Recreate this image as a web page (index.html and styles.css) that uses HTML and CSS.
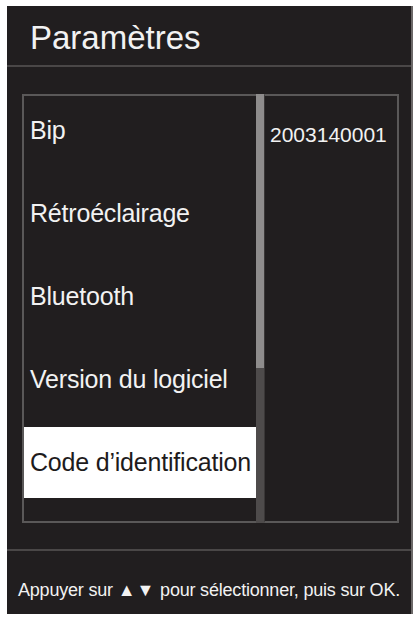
FILE: index.html
```html
<!DOCTYPE html>
<html lang="fr">
  <head>
    <meta charset="UTF-8" />
    <meta name="viewport" content="width=device-width, initial-scale=1.0" />
    <title>Paramètres</title>
    <link rel="stylesheet" href="styles.css">
  </head>
  <body>
    <div class="screen">
      <header class="title">Paramètres</header>
      <main class="content">
        <div class="frame">
          <ul class="menu">
            <li class="item">Bip</li>
            <li class="item">Rétroéclairage</li>
            <li class="item">Bluetooth</li>
            <li class="item">Version du logiciel</li>
            <li class="item selected">Code d’identification</li>
          </ul>
          <div class="scrollbar">
            <div class="thumb"></div>
          </div>
          <div class="detail">2003140001</div>
        </div>
      </main>
      <footer class="hint">
        Appuyer sur <span class="arrows">▲▼</span> pour sélectionner, puis sur OK.
      </footer>
    </div>
  </body>
</html>
```

FILE: styles.css
```css
:root {
  --panel: #211e1f;
  --line: #5a5858;
  --text: #f2f2f2;
}
html,
body {
  padding: 0;
  margin: 0;
  background-color: #ffffff;
}

.screen {
  display: flex;
  flex-direction: column;
  width: 404px;
  height: 608px;
  margin: 6px 0 0 7px;
  background-color: var(--panel);
  border-right: 2px solid #6b6868;
  font-family: "Liberation Sans", Arial, sans-serif;
  color: var(--text);
}

.title {
  height: 61px;
  box-sizing: border-box;
  padding: 14px 0 0 23px;
  font-size: 33px;
  line-height: 36px;
  border-bottom: 2px solid #4a4747;
}

.content {
  flex: 1;
  padding: 27px 12px 24px 15px;
  border-bottom: 2px solid #4a4747;
}

.frame {
  display: flex;
  height: 429px;
}

.menu {
  list-style: none;
  margin: 0;
  padding: 0;
  width: 232px;
  border: 2px solid var(--line);
  border-right: none;
}
.item {
  height: 71px;
  margin-bottom: 12px;
  padding-left: 6px;
  display: flex;
  align-items: center;
  white-space: nowrap;
  font-size: 25px;
  letter-spacing: -0.2px;
  &:first-child {
    margin-top: -1px;
  }
}
.selected {
  background-color: #ffffff;
  color: #1e1b1c;
}

.scrollbar {
  width: 8px;
  background-color: #4e4b4b;
  display: flex;
  flex-direction: column;
}
.thumb {
  height: 274px;
  background-color: #8e8c8c;
}

.detail {
  flex: 1;
  border: 2px solid var(--line);
  border-left: 1px solid #3a3737;
  padding: 27px 0 0 5px;
  font-size: 21px;
  line-height: 24px;
}

.hint {
  height: 63px;
  box-sizing: border-box;
  padding-top: 29px;
  text-align: center;
  font-size: 18px;
  letter-spacing: -0.2px;
  line-height: 20px;
}
.arrows {
  letter-spacing: 1px;
}
```
